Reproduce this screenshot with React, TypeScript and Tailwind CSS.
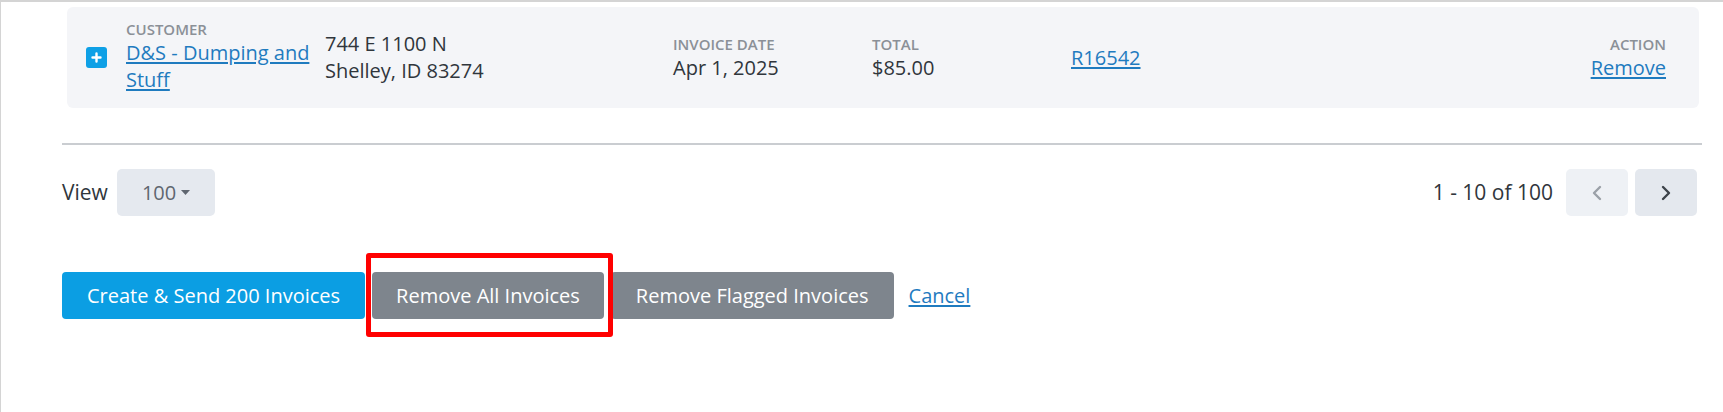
import type { ReactNode } from "react";

const font = { fontFamily: '"Open Sans", "Noto Sans", sans-serif' };

function Label({ children, right }: { children: ReactNode; right?: boolean }) {
  return (
    <div
      className={`text-[15px] leading-[20px] font-semibold uppercase text-[#8b9097] ${right ? "text-right" : ""}`}
    >
      {children}
    </div>
  );
}

function Link({ children }: { children: ReactNode }) {
  return (
    <a href="#" className="text-[#1f7bbf] underline underline-offset-2">
      {children}
    </a>
  );
}

function PlusIcon() {
  return (
    <div className="flex h-[21px] w-[21px] shrink-0 items-center justify-center rounded-[3px] bg-[#0ea0e6]">
      <svg width="11" height="11" viewBox="0 0 11 11">
        <path d="M5.5 1.5v8M1.5 5.5h8" stroke="#fff" strokeWidth="2.4" strokeLinecap="round" />
      </svg>
    </div>
  );
}

function Chevron({ dir, color }: { dir: "left" | "right"; color: string }) {
  return (
    <svg width="12" height="16" viewBox="0 0 12 16">
      <path
        d={dir === "left" ? "M9 2L3 8l6 6" : "M3 2l6 6-6 6"}
        fill="none"
        stroke={color}
        strokeWidth="2.4"
        strokeLinecap="round"
        strokeLinejoin="round"
      />
    </svg>
  );
}

function InvoiceRow() {
  return (
    <div className="ml-[5px] mr-[3px] mt-[5px] flex h-[101px] items-center rounded-[6px] bg-[#f4f5f8] pl-[19px] pr-[33px] text-[20px] leading-[27px] text-[#30363c]">
      <PlusIcon />
      <div className="ml-[19px] w-[199px] shrink-0 -mt-[3px]">
        <Label>Customer</Label>
        <Link>D&amp;S - Dumping and Stuff</Link>
      </div>
      <div className="w-[348px] shrink-0 -mt-[2px]">
        <div>744 E 1100 N</div>
        <div>Shelley, ID 83274</div>
      </div>
      <div className="w-[199px] shrink-0">
        <Label>Invoice Date</Label>
        <div>Apr 1, 2025</div>
      </div>
      <div className="w-[199px] shrink-0">
        <Label>Total</Label>
        <div>$85.00</div>
      </div>
      <div className="flex-1">
        <Link>R16542</Link>
      </div>
      <div className="text-right">
        <Label right>Action</Label>
        <Link>Remove</Link>
      </div>
    </div>
  );
}

export default function App() {
  return (
    <div
      className="h-[412px] w-[1723px] overflow-hidden border-t-2 border-l border-[#d4d4d4] bg-white"
      style={font}
    >
      <div className="ml-[61px] w-[1640px]">
        <InvoiceRow />

        <div className="mt-[35px] h-[2px] bg-[#cacdd1]" />

        <div className="mt-[24px] flex h-[47px] items-center justify-between pr-[5px] text-[20px] text-[#30363c]">
          <div className="flex items-center gap-[9px]">
            <span className="text-[21px]">View</span>
            <button className="flex h-[47px] w-[98px] items-center rounded-[5px] bg-[#e5e9ef] pl-[25px] text-[#5f6670]">
              <span>100</span>
              <svg className="ml-[5px]" width="9" height="5" viewBox="0 0 9 5">
                <path d="M0 0h9L4.5 5z" fill="#5f6670" />
              </svg>
            </button>
          </div>
          <div className="flex items-center">
            <span className="mr-[13px] text-[21px]">1 - 10 of 100</span>
            <button className="flex h-[47px] w-[62px] items-center justify-center rounded-[5px] bg-[#eef1f5]">
              <Chevron dir="left" color="#9ba1a8" />
            </button>
            <button className="ml-[7px] flex h-[47px] w-[62px] items-center justify-center rounded-[5px] bg-[#e4e8ee]">
              <Chevron dir="right" color="#3d434a" />
            </button>
          </div>
        </div>

        <div className="relative mt-[56px] flex items-center text-[20px]">
          <button className="h-[47px] rounded-[4px] bg-[#0b9ee3] px-[25px] text-white">
            Create &amp; Send 200 Invoices
          </button>
          <button className="ml-[7px] h-[47px] rounded-[4px] bg-[#7e858d] px-[24px] text-white">
            Remove All Invoices
          </button>
          <button className="ml-[7px] h-[47px] rounded-[4px] bg-[#7e858d] px-[25px] text-white">
            Remove Flagged Invoices
          </button>
          <a href="#" className="ml-[15px] text-[#1f7bbf] underline underline-offset-2">
            Cancel
          </a>
          <div className="pointer-events-none absolute left-[304px] top-[-19px] h-[84px] w-[247px] rounded-[3px] border-[5px] border-[#ff0000]" />
        </div>
      </div>
    </div>
  );
}
